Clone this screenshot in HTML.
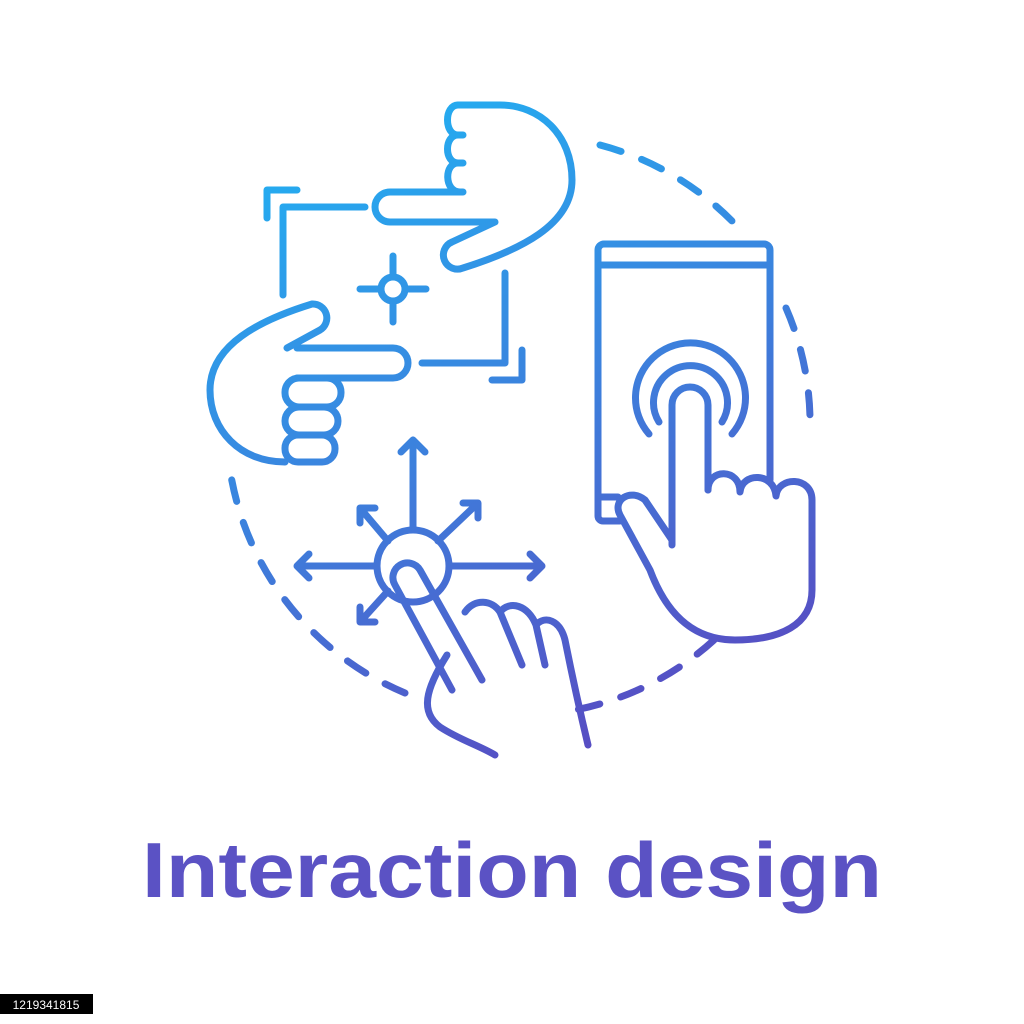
<!DOCTYPE html>
<html><head><meta charset="utf-8"><style>
html,body{margin:0;padding:0;background:#fff;width:1024px;height:1024px;overflow:hidden}
svg{display:block}
</style></head><body>
<svg width="1024" height="1024" viewBox="0 0 1024 1024" xmlns="http://www.w3.org/2000/svg">
<defs>
<linearGradient id="g" gradientUnits="userSpaceOnUse" x1="350" y1="100" x2="650" y2="760">
<stop offset="0" stop-color="#22b0f2"/>
<stop offset="0.5" stop-color="#3d7fdc"/>
<stop offset="1" stop-color="#5a48c0"/>
</linearGradient>
</defs>
<g fill="none" stroke="url(#g)" stroke-width="7" stroke-linecap="round" stroke-linejoin="round">
<g stroke-dasharray="22 22">
<path d="M600,145 A290,290 0 0 1 733,222"/>
<path d="M786,308 A290,290 0 0 1 810,430"/>
<path d="M714,640 A290,290 0 0 1 575,710"/>
<path d="M405,693 A290,290 0 0 1 230,470"/>
</g>
<path d="M463,192 H390 A15,15 0 0 0 390,222 H495 L452,242 A14,14 0 0 0 463,268 C520,250 572,225 572,180 C572,135 540,105 500,105 H458"/>
<path d="M458,105 C444,105 444,135 458,135 H463 M458,135 C444,135 444,163 458,163 H463 M458,163 C444,163 444,192 460,192"/>
<path d="M287,348 L320,330 A14,14 0 0 0 312,304 C260,320 210,345 210,390 C210,430 240,462 285,462"/>
<path d="M297,348 H393 A15,15 0 0 1 393,378 H297"/>
<rect x="285" y="378" width="56" height="29" rx="14"/>
<rect x="285" y="407" width="53" height="28" rx="14"/>
<rect x="285" y="435" width="50" height="27" rx="13"/>
<path d="M267,218 V190 H297"/>
<path d="M283,295 V207 H365"/>
<path d="M505,273 V363 H422"/>
<path d="M522,350 V380 H492"/>
<circle cx="393" cy="289" r="12"/>
<path d="M360,289 H381 M405,289 H426 M393,256 V277 M393,301 V322"/>
<path d="M770,480 V250 A6,6 0 0 0 764,244 H604 A6,6 0 0 0 598,250 V516 A5,5 0 0 0 603,521 H620"/>
<path d="M598,265 H770 M598,497 H618"/>
<path d="M649,434 A55,55 0 1 1 732,434"/>
<path d="M659,422 A37,37 0 1 1 722,422"/>
<path d="M672,545 V405 A18,18 0 0 1 708,405 V490"/>
<path d="M708,490 C708,468 740,468 740,492 C742,472 774,472 776,496 C778,476 812,476 812,500 V590 C812,625 780,640 735,640 C690,640 665,610 650,570 L620,515 C612,500 630,488 645,500 L672,540"/>
<circle cx="413" cy="566" r="36"/>
<path d="M413,530 V440 M401,452 L413,440 L425,452"/>
<path d="M377,566 H297 M309,554 L297,566 L309,578"/>
<path d="M449,566 H542 M530,554 L542,566 L530,578"/>
<path d="M388,541 L360,508 M360,523 L360,508 L375,508"/>
<path d="M438,541 L478,503 M463,503 L478,503 L478,518"/>
<path d="M388,591 L360,622 M360,607 L360,622 L375,622"/>
<path d="M452,690 L395,585 A14,14 0 0 1 420,570 L482,680"/>
<path d="M465,612 C475,598 492,600 500,612 L522,665 M500,612 C510,600 528,605 536,625 L545,665 M536,625 C545,615 560,620 565,640 C575,690 582,720 588,745"/>
<path d="M447,655 C425,690 420,712 440,727 C460,740 478,745 495,755"/>
</g>
<text x="512" y="897" text-anchor="middle" font-family="Liberation Sans, sans-serif" font-weight="bold" font-size="78" fill="#5b52c4" textLength="740" lengthAdjust="spacingAndGlyphs">Interaction design</text>
<rect x="0" y="994" width="93" height="20" fill="#000"/>
<text x="46" y="1009" text-anchor="middle" font-family="Liberation Sans, sans-serif" font-size="12" fill="#fff">1219341815</text>
</svg>
</body></html>
